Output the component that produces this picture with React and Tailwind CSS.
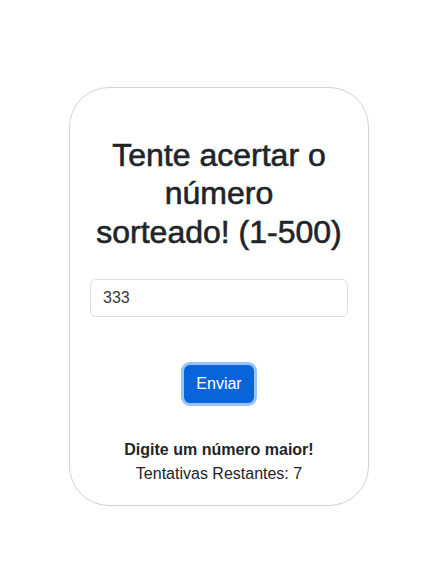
export default function App() {
  return (
    <div className="min-h-[569px] bg-white flex justify-center pt-[87px] pr-[6px] font-['Liberation_Sans',Arial,sans-serif] text-[#212529]">
      <div className="w-[300px] self-start border border-[#d3d3d3] rounded-[40px] px-[20px] pt-[48px] pb-[19px] flex flex-col items-center">
        <h1 className="w-[248px] text-[32px] leading-[38.4px] font-medium text-center [-webkit-text-stroke:0.6px_#212529]">
          Tente acertar o número sorteado! (1-500)
        </h1>
        <input
          readOnly
          value="333"
          className="mt-[28px] w-full h-[38px] border border-[#dee2e6] rounded-[6px] px-3 text-[16px] text-[#333a40] outline-none"
        />
        <button className="mt-[48px] h-[38px] px-3 rounded-[6px] bg-[#0a64d9] text-white text-[16px] ring-[3px] ring-[#98c1fe]">
          Enviar
        </button>
        <p className="mt-[35px] text-[16px] leading-[24px] font-bold">Digite um número maior!</p>
        <p className="text-[16px] leading-[24px]">Tentativas Restantes: 7</p>
      </div>
    </div>
  );
}
